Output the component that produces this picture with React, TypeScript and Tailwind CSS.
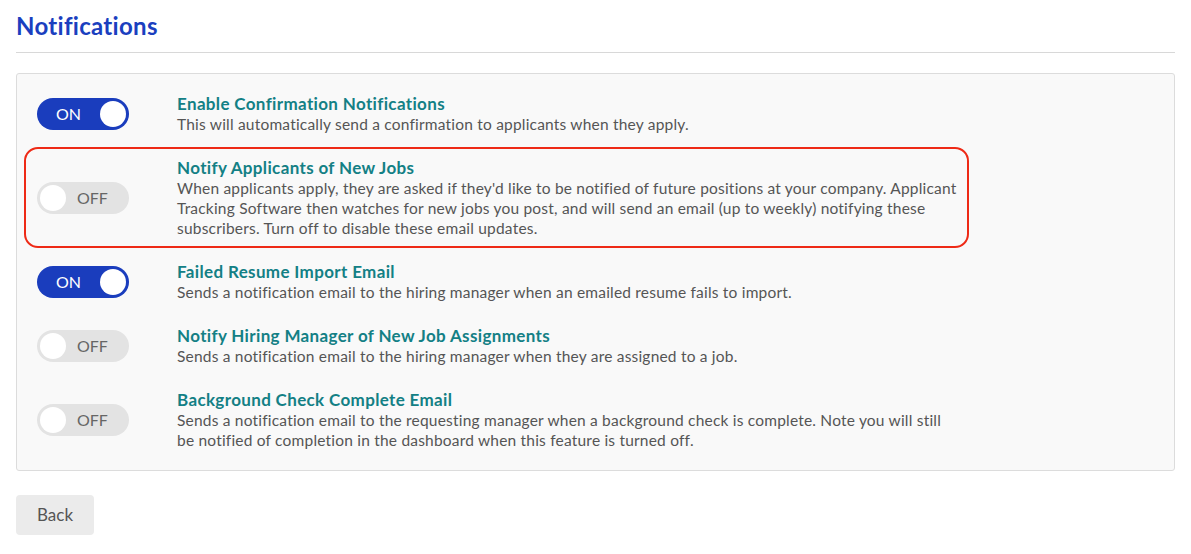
import React, { useState } from 'react'

type Setting = {
  id: string
  title: string
  description: string
  on: boolean
  highlight?: boolean
}

const SETTINGS: Setting[] = [
  {
    id: 'confirm',
    title: 'Enable Confirmation Notifications',
    description: 'This will automatically send a confirmation to applicants when they apply.',
    on: true,
  },
  {
    id: 'newjobs',
    title: 'Notify Applicants of New Jobs',
    description:
      "When applicants apply, they are asked if they'd like to be notified of future positions at your company. Applicant Tracking Software then watches for new jobs you post, and will send an email (up to weekly) notifying these subscribers. Turn off to disable these email updates.",
    on: false,
    highlight: true,
  },
  {
    id: 'resume',
    title: 'Failed Resume Import Email',
    description: 'Sends a notification email to the hiring manager when an emailed resume fails to import.',
    on: true,
  },
  {
    id: 'assign',
    title: 'Notify Hiring Manager of New Job Assignments',
    description: 'Sends a notification email to the hiring manager when they are assigned to a job.',
    on: false,
  },
  {
    id: 'background',
    title: 'Background Check Complete Email',
    description:
      'Sends a notification email to the requesting manager when a background check is complete. Note you will still be notified of completion in the dashboard when this feature is turned off.',
    on: false,
  },
]

function Toggle({ on, onClick }: { on: boolean; onClick: () => void }) {
  if (on) {
    return (
      <button
        type="button"
        onClick={onClick}
        className="flex h-[32px] w-[92px] shrink-0 items-center justify-between rounded-full bg-[#1a3dbd] pl-[19px] pr-[3px]"
      >
        <span className="text-[16px] leading-[20px] text-white">ON</span>
        <span className="h-[26px] w-[26px] rounded-full bg-white" />
      </button>
    )
  }
  return (
    <button
      type="button"
      onClick={onClick}
      className="flex h-[32px] w-[92px] shrink-0 items-center gap-[11px] rounded-full bg-[#e3e3e3] pl-[3px]"
    >
      <span className="h-[26px] w-[26px] rounded-full bg-white" />
      <span className="text-[16px] leading-[20px] text-[#666]">OFF</span>
    </button>
  )
}

export default function App() {
  const [settings, setSettings] = useState(SETTINGS)

  const flip = (id: string) =>
    setSettings((list) => list.map((s) => (s.id === id ? { ...s, on: !s.on } : s)))

  return (
    <div className="min-h-[554px] bg-white px-4 pt-[11px] font-['Lato','Helvetica',sans-serif]">
      <h1 className="text-[24px] font-bold leading-[30px] tracking-[0.3px] text-[#1b3fbf]">Notifications</h1>
      <div className="mt-[11px] h-px bg-[#d8d8d8]" />

      <div className="mt-[20px] flex flex-col gap-[3px] rounded-[3px] border border-[#dcdcdc] bg-[#f9f9f9] pb-[10px] pl-[7px] pt-[9px]">
        {settings.map((s) => (
          <div
            key={s.id}
            className={
              s.highlight
                ? 'flex w-[945px] items-center gap-[48px] rounded-[14px] border-2 border-[#ee2a16] py-[8px] pl-[11px] pr-[5px]'
                : 'flex w-[945px] items-center gap-[48px] rounded-[14px] border-2 border-transparent py-[8px] pl-[11px] pr-[5px]'
            }
          >
            <Toggle on={s.on} onClick={() => flip(s.id)} />
            <div className="flex-1">
              <div className="text-[17px] font-bold leading-[21px] tracking-[0.35px] text-[#138085]">{s.title}</div>
              <p className="text-[15.5px] leading-[20px] tracking-[0.2px] text-[#555]">{s.description}</p>
            </div>
          </div>
        ))}
      </div>

      <button
        type="button"
        className="mt-[24px] h-[40px] w-[78px] rounded-[4px] bg-[#ebebeb] text-[17px] text-[#555]"
      >
        Back
      </button>
    </div>
  )
}
